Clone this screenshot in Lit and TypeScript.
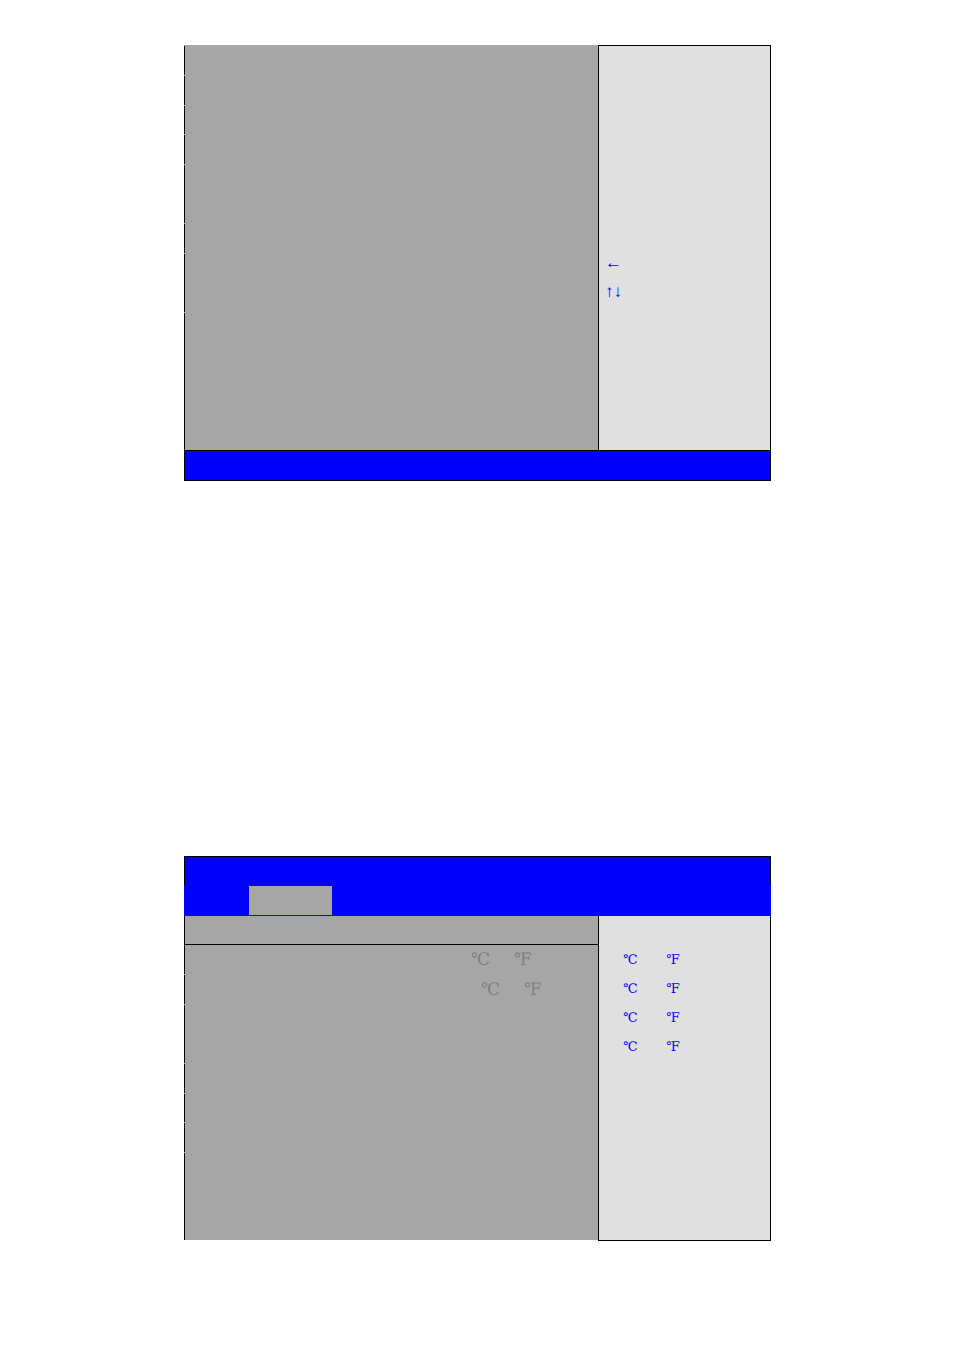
import { LitElement, html, css } from "lit";
import { customElement } from "lit/decorators.js";

const panelStyles = css`
  :host {
    display: block;
  }
  .body {
    display: grid;
    grid-template-columns: 414fr 173fr;
  }
  .main {
    display: flex;
    flex-direction: column;
    background: #a6a6a6;
  }
  .row {
    box-sizing: border-box;
    height: 29px;
    border-left: 1px solid #000;
  }
  .row + .row,
  .gap {
    margin-top: 1px;
  }
  .short {
    height: 28px;
  }
  .double {
    height: 58px;
  }
  .fill {
    flex: 1;
    height: auto;
  }
  .side {
    box-sizing: border-box;
    background: #e0e0e0;
    border: 0 solid #000;
    border-width: 0 1px 0 1px;
    color: #00f;
  }
`;

@customElement("setup-panel")
export class SetupPanel extends LitElement {
  static styles = [
    panelStyles,
    css`
      .body {
        min-height: 405px;
      }
      .side {
        border-top-width: 1px;
        padding: 202px 6px 0;
      }
      .keys {
        margin: 0;
        padding: 0;
        list-style: none;
        font: 17px/29px "Liberation Serif", serif;
      }
      .footer {
        height: 29px;
        border: 1px solid #000;
        background: #00f;
      }
    `,
  ];

  render() {
    return html`
      <div class="body">
        <div class="main">
          <div class="row gap"></div>
          <div class="row"></div>
          <div class="row short"></div>
          <div class="row"></div>
          <div class="row double"></div>
          <div class="row"></div>
          <div class="row double"></div>
          <div class="row fill"></div>
        </div>
        <aside class="side">
          <ul class="keys">
            <li>←</li>
            <li>↑↓</li>
          </ul>
        </aside>
      </div>
      <div class="footer"></div>
    `;
  }
}

@customElement("health-panel")
export class HealthPanel extends LitElement {
  static styles = [
    panelStyles,
    css`
      .title {
        height: 28px;
        border: 1px solid #000;
        border-bottom: 0;
        background: #00f;
      }
      .tabs {
        display: grid;
        grid-template-columns: 65fr 83fr 439fr;
        padding: 1px 0;
        height: 29px;
        background: #00f;
      }
      .tab {
        grid-column: 2;
        background: #a6a6a6;
      }
      .body {
        min-height: 325px;
      }
      .main {
        margin-bottom: 1px;
      }
      .heading {
        border-bottom: 1px solid #000;
      }
      .heading + .row {
        margin-top: 0;
      }
      .side {
        border-bottom-width: 1px;
        padding: 29px 24px 0;
      }
      .temp {
        display: flex;
        font: 17px/29px "DejaVu Serif", serif;
        color: #808080;
        padding-left: 286px;
      }
      .temp.later {
        padding-left: 296px;
      }
      .unit {
        width: 43px;
      }
      .side .temp {
        font-size: 13px;
        color: #00f;
        padding-left: 0;
      }
    `,
  ];

  private units() {
    return html`<span class="unit">℃</span><span class="unit">℉</span>`;
  }

  render() {
    return html`
      <div class="title"></div>
      <div class="tabs"><div class="tab"></div></div>
      <div class="body">
        <div class="main">
          <div class="row heading"></div>
          <div class="row temp">${this.units()}</div>
          <div class="row temp later">${this.units()}</div>
          <div class="row double"></div>
          <div class="row"></div>
          <div class="row short"></div>
          <div class="row"></div>
          <div class="row fill"></div>
        </div>
        <aside class="side">
          ${[0, 1, 2, 3].map(() => html`<div class="temp">${this.units()}</div>`)}
        </aside>
      </div>
    `;
  }
}

@customElement("app-root")
export class AppRoot extends LitElement {
  static styles = css`
    :host {
      display: block;
      background: #fff;
    }
    .page {
      display: flex;
      flex-direction: column;
      gap: 375px;
      padding: 45px 183px 109px 184px;
    }
  `;

  render() {
    return html`
      <main class="page">
        <setup-panel></setup-panel>
        <health-panel></health-panel>
      </main>
    `;
  }
}
